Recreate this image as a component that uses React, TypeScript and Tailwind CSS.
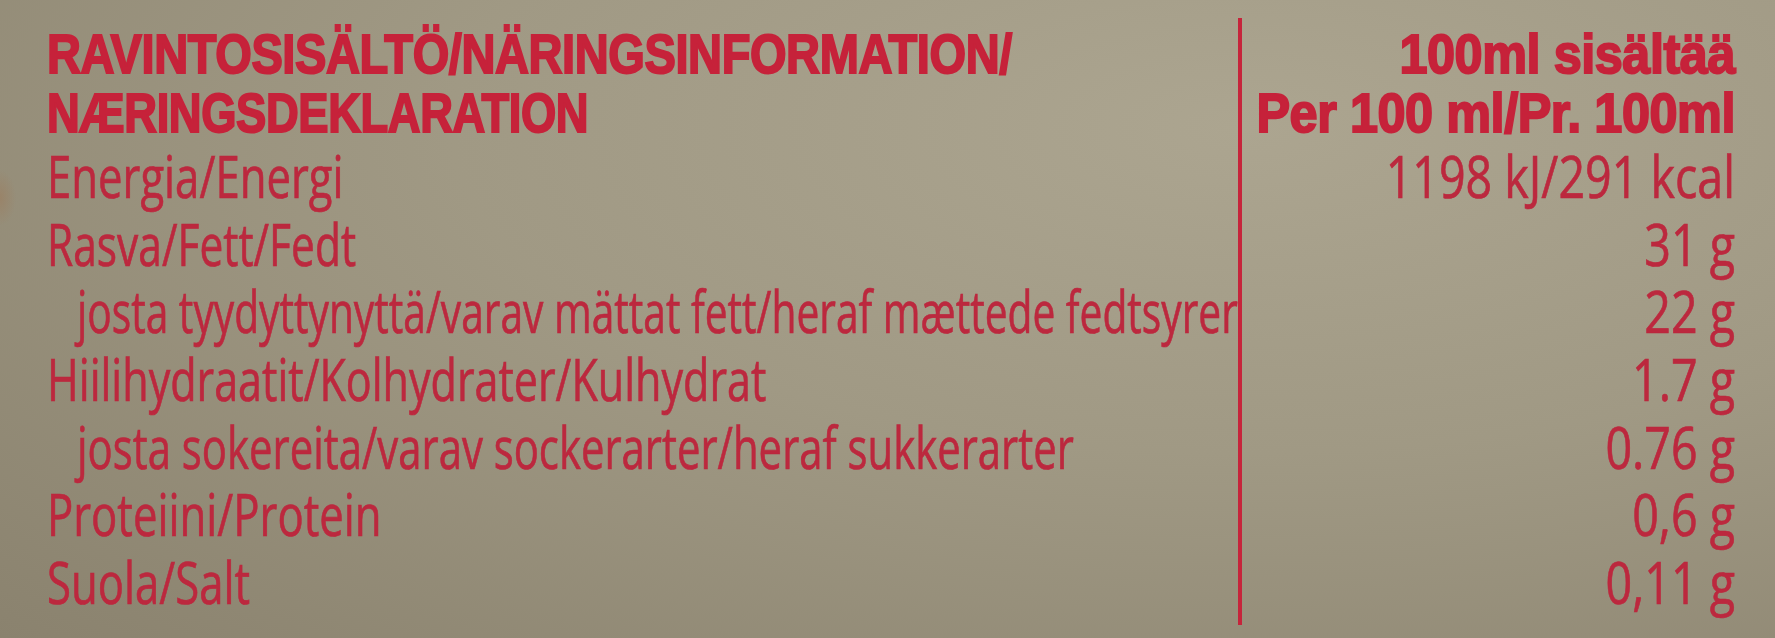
type Row = {
  label: string;
  value: string;
  sub?: boolean;
  labelScale: string;
};

const rows: Row[] = [
  { label: "Energia/Energi", value: "1198 kJ/291 kcal", labelScale: "scale-x-[0.74]" },
  { label: "Rasva/Fett/Fedt", value: "31 g", labelScale: "scale-x-[0.72]" },
  {
    label: "josta tyydyttynyttä/varav mättat fett/heraf mættede fedtsyrer",
    value: "22 g",
    sub: true,
    labelScale: "scale-x-[0.69]",
  },
  {
    label: "Hiilihydraatit/Kolhydrater/Kulhydrat",
    value: "1.7 g",
    labelScale: "scale-x-[0.73]",
  },
  {
    label: "josta sokereita/varav sockerarter/heraf sukkerarter",
    value: "0.76 g",
    sub: true,
    labelScale: "scale-x-[0.71]",
  },
  { label: "Proteiini/Protein", value: "0,6 g", labelScale: "scale-x-[0.74]" },
  { label: "Suola/Salt", value: "0,11 g", labelScale: "scale-x-[0.74]" },
];

const heading =
  "whitespace-nowrap font-['Liberation_Sans',Arial,sans-serif] text-[56px] font-bold tracking-[-0.5px] text-[#c6223a] [-webkit-text-stroke:2px_#c6223a]";
const body =
  "h-[67.7px] whitespace-nowrap text-[59px] leading-[67.7px] [-webkit-text-stroke:0.7px_#bc283e]";

export default function App() {
  return (
    <div className="flex h-[638px] w-[1775px] overflow-hidden bg-[radial-gradient(ellipse_16px_28px_at_0%_31%,#9e734f66_0%,#9e734f00_100%),radial-gradient(ellipse_at_70%_20%,#aca590_0%,#a09984_45%,#8a826e_100%)] font-['Open_Sans','Noto_Sans',sans-serif] text-[#bc283e] blur-[0.4px]">
      {/* left column: labels */}
      <div className="w-[1238px] min-w-0 shrink-0 pl-[47px] pt-[23px]">
        <div className={`h-[61px] origin-left scale-x-[0.84] leading-[61px] ${heading}`}>
          RAVINTOSISÄLTÖ/NÄRINGSINFORMATION/
        </div>
        <div className={`h-[58px] origin-left scale-x-[0.81] leading-[58px] ${heading}`}>
          NÆRINGSDEKLARATION
        </div>
        {rows.map((row) => (
          <div key={row.label} className={row.sub ? "pl-[30px]" : ""}>
            <div className={`${body} origin-left ${row.labelScale}`}>{row.label}</div>
          </div>
        ))}
      </div>

      <div className="mb-[13px] mt-[18px] w-[4px] shrink-0 bg-[#c6243b]" />

      {/* right column: values per 100 ml */}
      <div className="min-w-0 flex-1 pr-[40px] pt-[23px]">
        <div className={`flex h-[61px] origin-right scale-x-[0.9] justify-end leading-[61px] ${heading}`}>
          <span>100ml sisältää</span>
        </div>
        <div className={`flex h-[58px] origin-right scale-x-[0.9] justify-end leading-[58px] ${heading}`}>
          <span>Per 100 ml/Pr. 100ml</span>
        </div>
        {rows.map((row) => (
          <div key={row.value} className={`${body} flex origin-right scale-x-[0.79] justify-end`}>
            <span>{row.value}</span>
          </div>
        ))}
      </div>
    </div>
  );
}
